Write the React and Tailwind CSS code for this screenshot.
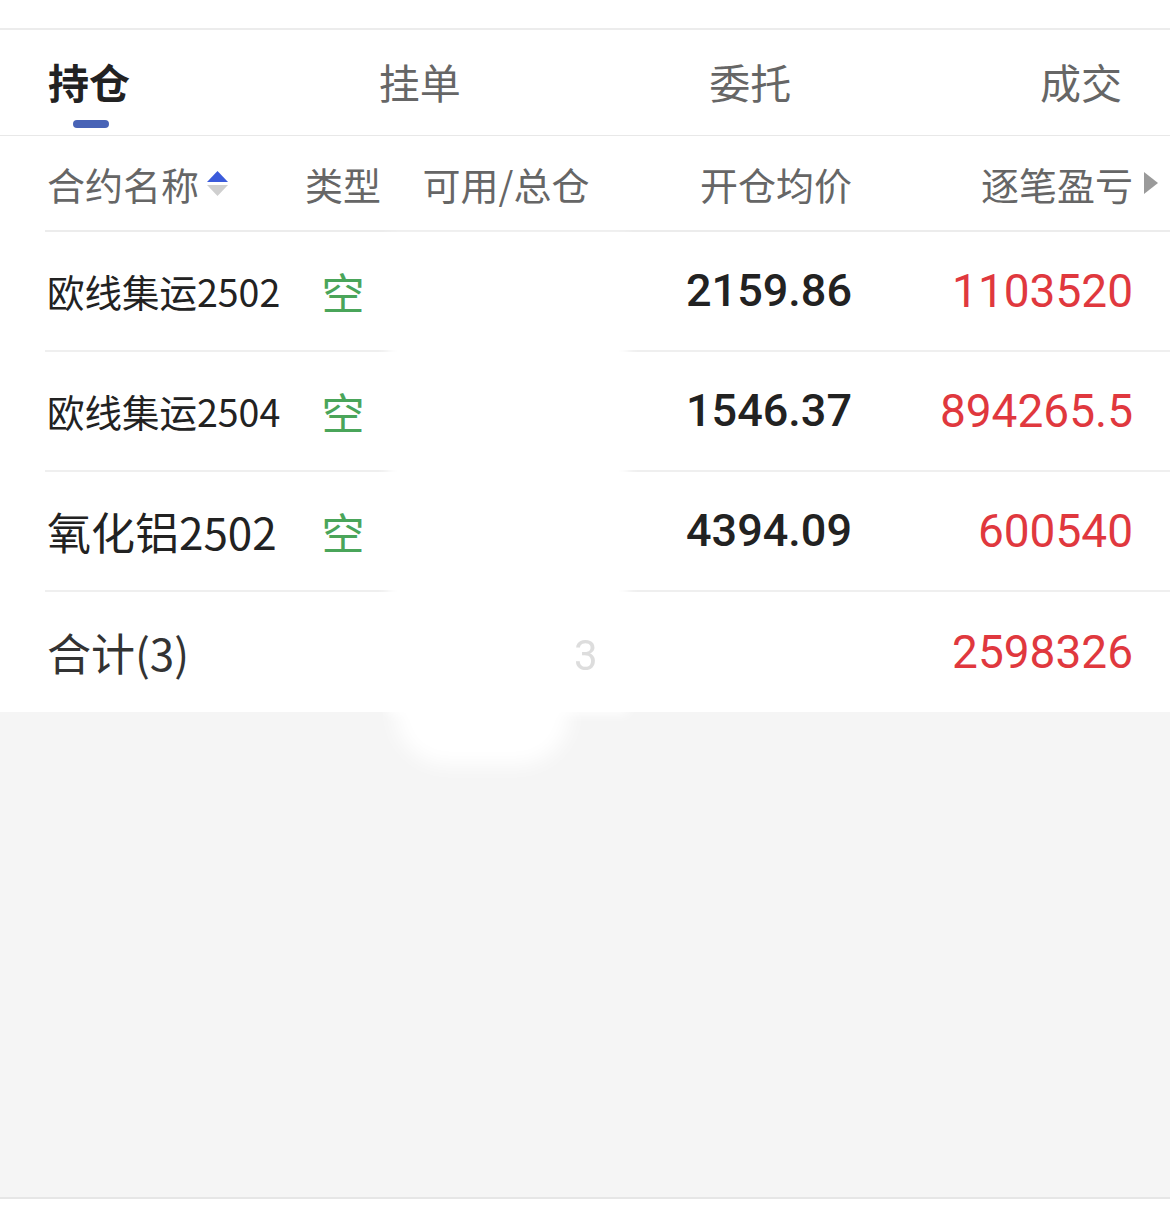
import React from 'react';

const rows = [
    {name: '欧线集运2502', nameSize: 'text-[37.5px]', type: '空', price: '2159.86', pnl: '1103520'},
    {name: '欧线集运2504', nameSize: 'text-[37.5px]', type: '空', price: '1546.37', pnl: '894265.5'},
    {name: '氧化铝2502', nameSize: 'text-[44px]', type: '空', price: '4394.09', pnl: '600540'},
];

const tabs = ['持仓', '挂单', '委托', '成交'];

const SortIcon = () => (
    <span className="ml-[8px] flex flex-col gap-[3px]">
        <svg width="21" height="11" viewBox="0 0 21 11"><path d="M10.5 0L21 11H0z" fill="#3b5bdb"/></svg>
        <svg width="21" height="11" viewBox="0 0 21 11"><path d="M0 0h21L10.5 11z" fill="#cfcfcf"/></svg>
    </span>
);

export default function App() {
    const font = {fontFamily: '"Noto Sans CJK SC", "Noto Sans", sans-serif'};
    const num = 'font-["Roboto","Noto_Sans_CJK_SC",sans-serif]';

    return (
        <div className="relative w-[1170px] h-[1215px] bg-white flex flex-col font-['Noto_Sans_CJK_SC',sans-serif] overflow-hidden" style={font}>
            <div className="h-[30px] border-b-2 border-[#ececec]"></div>

            {/* tabs */}
            <div className="h-[106px] border-b border-[#e8e8e8] flex justify-between items-start px-[48px]">
                {tabs.map((t, i) => (
                    <div key={t} className="flex flex-col items-center pt-[21px]">
                        <span className={i === 0 ? 'text-[41px] leading-[60px] font-bold text-[#222]' : 'text-[41px] leading-[60px] text-[#666]'}>{t}</span>
                        {i === 0 && <span className="mt-[9px] ml-[4px] w-[36px] h-[8px] rounded-full bg-[#4863b6]"></span>}
                    </div>
                ))}
            </div>

            {/* header */}
            <div className="ml-[45px] h-[96px] border-b-2 border-[#ececec] grid grid-cols-[245px_106px_220px_236px_281px] items-center text-[38px] text-[#666]">
                <div className="flex items-center pl-[2px]">合约名称<SortIcon/></div>
                <div className="text-center">类型</div>
                <div className="text-center">可用/总仓</div>
                <div className="text-right">开仓均价</div>
                <div className="flex items-center justify-end">
                    逐笔盈亏
                    <svg className="mr-[-25px] ml-[11px]" width="14" height="22" viewBox="0 0 14 22"><path d="M0 0L14 11L0 22z" fill="#9a9a9a"/></svg>
                </div>
            </div>

            {/* rows */}
            {rows.map((r) => (
                <div key={r.name} className="ml-[45px] h-[120px] border-b-2 border-[#efefef] grid grid-cols-[245px_106px_220px_236px_281px] items-center">
                    <div className={`pl-[2px] ${r.nameSize} text-[#222] whitespace-nowrap`}>{r.name}</div>
                    <div className="text-center text-[43px] text-[#4aa55a]">{r.type}</div>
                    <div></div>
                    <div className={`text-right text-[45px] font-medium text-[#222] ${num}`}>{r.price}</div>
                    <div className={`text-right text-[46px] text-[#e0383e] ${num}`}>{r.pnl}</div>
                </div>
            ))}

            <div className="ml-[45px] h-[120px] grid grid-cols-[245px_106px_220px_236px_281px] items-center">
                <div className="pl-[2px] text-[44px] text-[#333]">合计(3)</div>
                <div></div>
                <div></div>
                <div></div>
                <div className={`text-right text-[46px] text-[#e0383e] ${num}`}>2598326</div>
            </div>

            <div className="flex-1 bg-[#f5f5f5] border-b-2 border-[#e6e6e6]"></div>
            <div className="h-[16px] bg-white"></div>

            {/* redaction smear over the 可用/总仓 column */}
            <div className="absolute left-[388px] top-[236px] w-[240px] h-[478px] bg-white blur-[6px]"></div>
            <div className="absolute left-[395px] top-[660px] w-[175px] h-[105px] rounded-full bg-white blur-[10px]"></div>
            <span className="absolute left-[574px] top-[624px] text-[42px] text-[#cfcfcf] opacity-70 font-['Roboto',sans-serif]">3</span>
        </div>
    );
}
